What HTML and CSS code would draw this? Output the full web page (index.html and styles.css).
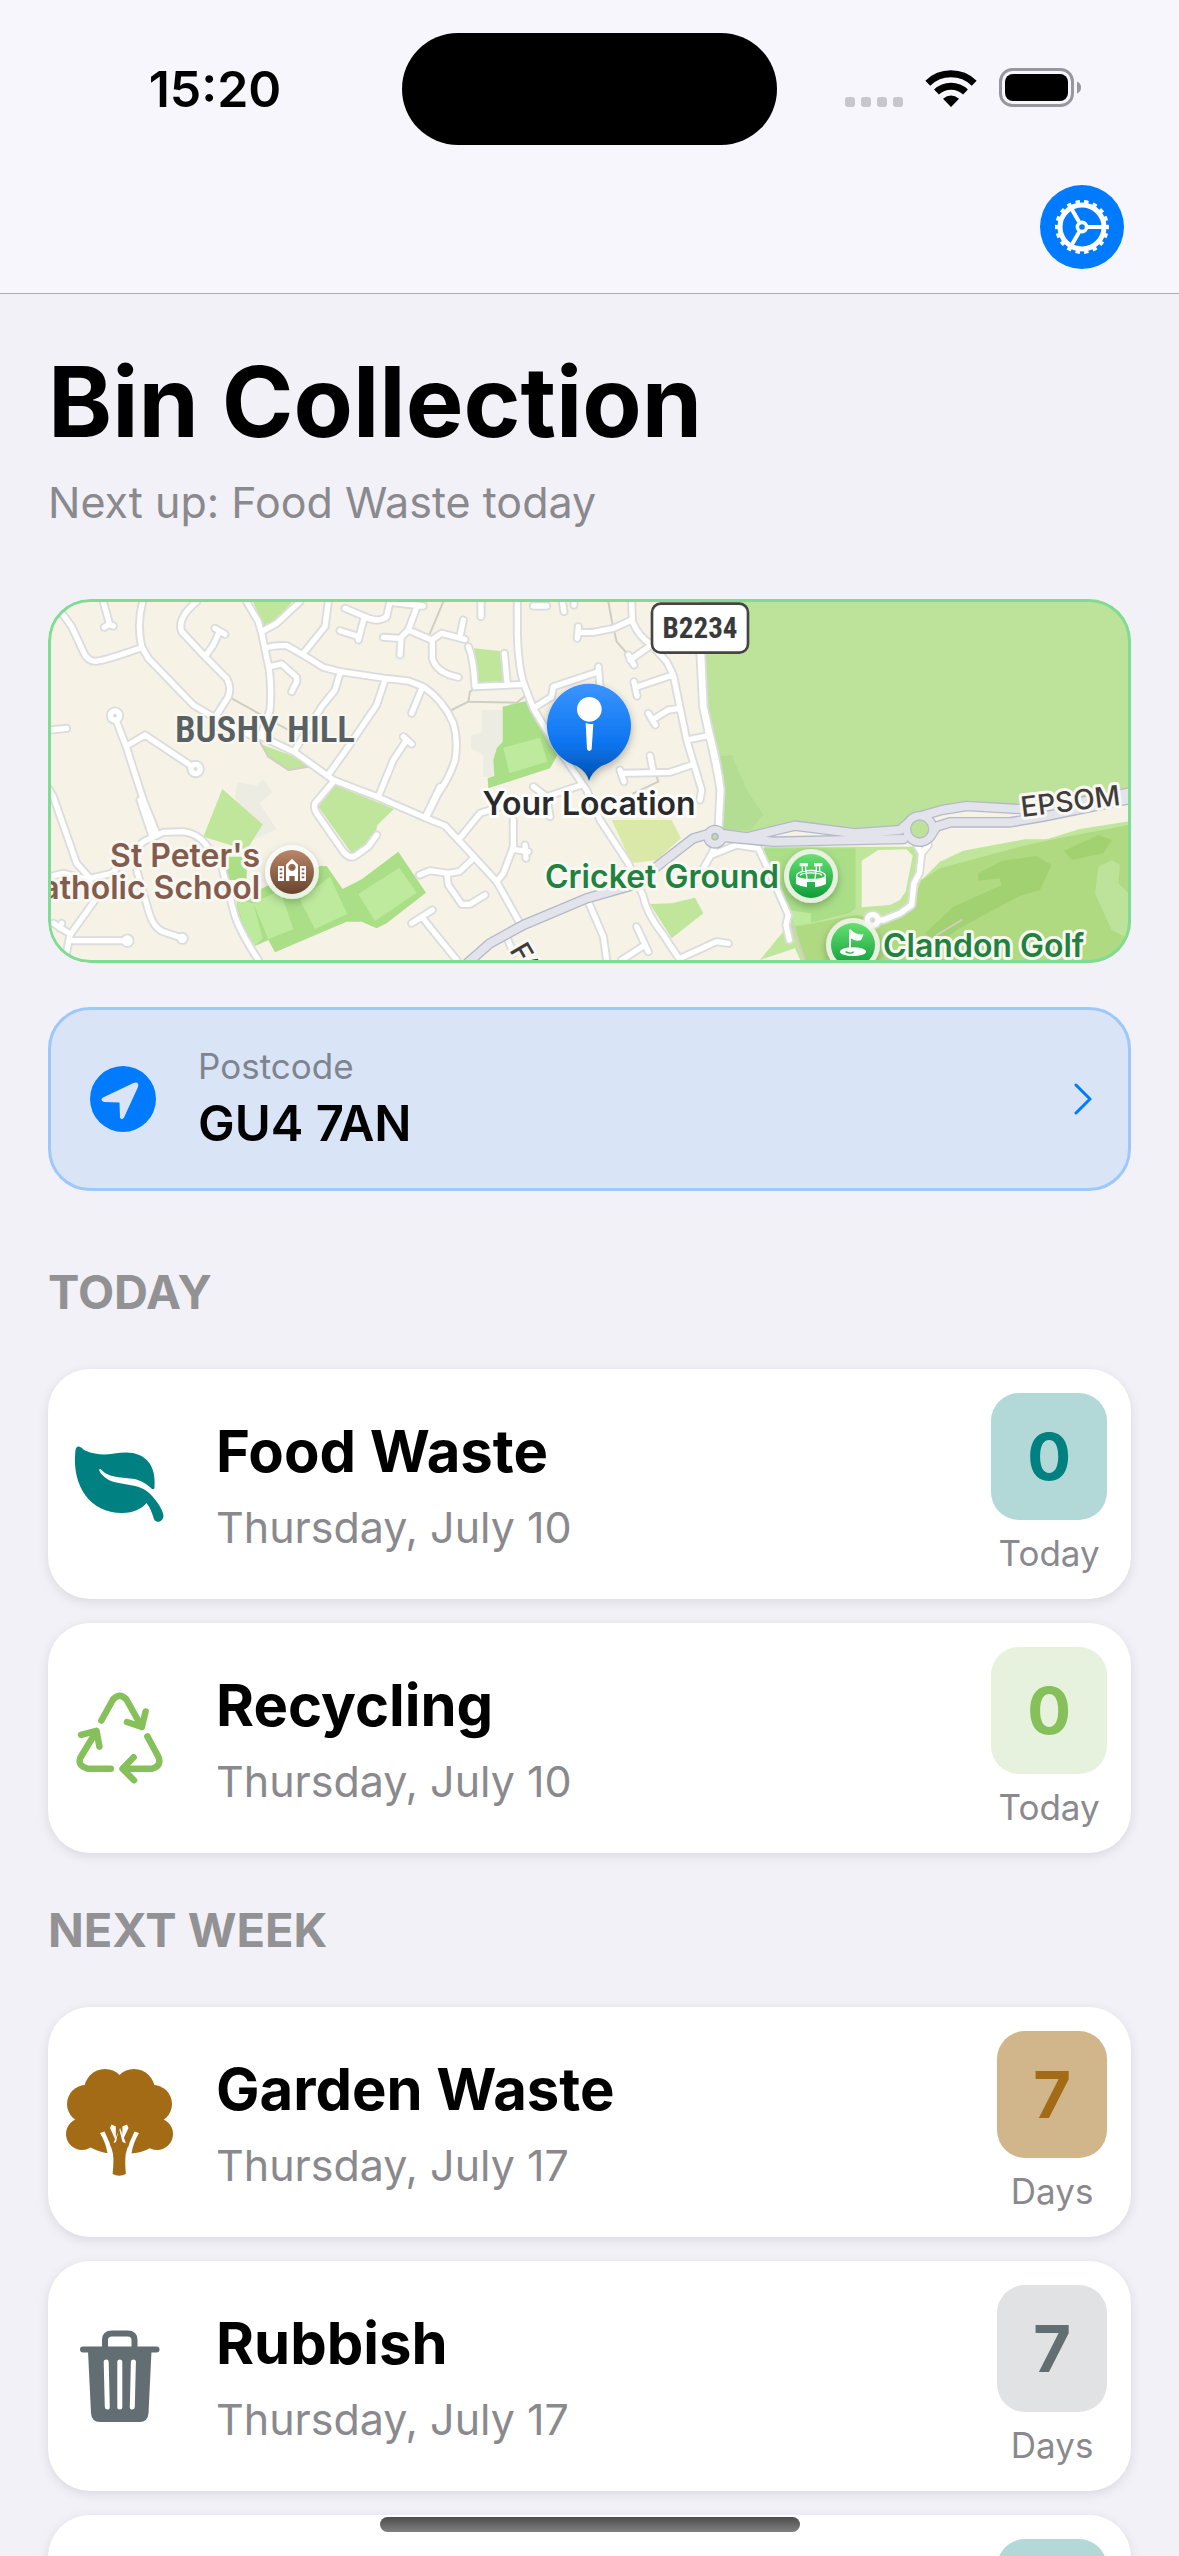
FILE: index.html
```html
<!DOCTYPE html>
<html lang="en">
<head>
<meta charset="utf-8">
<meta name="viewport" content="width=device-width, initial-scale=1">
<title>Bin Collection</title>
<link rel="stylesheet" href="styles.css">
</head>
<body>
<svg class="sprite" aria-hidden="true">
  <symbol id="icon-leaf" viewBox="0 0 108 108">
    <path fill="currentColor" d="M12 16.500C10 17 9.600 19 9.300 22C6 56 24 83 56 83C68 83 76 78.500 80.500 73C84.500 78 86 83 88 89C89.500 93.500 97 92.500 97.500 86C97.500 80 88 66 80 60.500C66 52 50 56 39 47.500C35.500 44.500 33.500 42 33.200 40C33.400 38.800 34.500 38.800 35.500 40C44 49 60 47 70.500 49.500C77 51.500 82 55 85.500 58.500C87 59.600 88.300 59 88.500 57.500C90.500 36 80 22.500 60 22.500C46 22.500 37 28 19 20.500C16 18.500 14.500 16 12 16.500Z"/>
  </symbol>
</svg>
<div class="app">
  <header class="header">
    <div class="status">
      <time class="clock">15:20</time>
      <div class="island"></div>
      <div class="indicators">
        <svg width="58" height="10" viewBox="0 0 58 10" aria-hidden="true"><g fill="#c7c6cb"><rect width="10" height="10" rx="3"/><rect x="16" width="10" height="10" rx="3"/><rect x="32" width="10" height="10" rx="3"/><rect x="48" width="10" height="10" rx="3"/></g></svg>
        <svg width="52" height="38" viewBox="0 0 52 38" aria-hidden="true"><g fill="none" stroke="#000"><path stroke-width="7" d="M2.800 14.200A33.400 33.400 0 0 1 49.200 14.200"/><path stroke-width="7" d="M11.500 23A21 21 0 0 1 40.500 23"/></g><path d="M26 38L18 29.800Q26 23 34 29.800Z"/></svg>
        <svg width="82" height="39" viewBox="0 0 82 39" aria-hidden="true"><rect x="1.500" y="1.500" width="72" height="36" rx="12" fill="none" stroke="#98979c" stroke-width="3"/><rect x="6" y="6" width="63" height="27" rx="8"/><path fill="#98979c" d="M78 13.500Q82 15 82 19.500T78 25.500Z"/></svg>
      </div>
    </div>
    <nav class="toolbar">
      <button class="settings" type="button" aria-label="Settings">
        <svg viewBox="0 0 84 84" fill="none" stroke="#fff" aria-hidden="true">
          <circle cx="42" cy="42" r="22" stroke-width="5"/>
          <circle cx="42" cy="42" r="25" stroke-width="4" pathLength="36" stroke-dasharray="1 1" stroke-dashoffset="0.500"/>
          <circle cx="42" cy="42" r="4.600" stroke-width="3.600"/>
          <path stroke-width="4" d="M48 42H63M39 36.800L31.500 23.800M39 47.200L31.500 60.200"/>
        </svg>
      </button>
    </nav>
  </header>

  <main class="content">
    <h1 class="title">Bin Collection</h1>
    <p class="subtitle">Next up: Food Waste today</p>

    <div class="map">
      <svg class="map-art" viewBox="0 0 1083 364" preserveAspectRatio="xMidYMid slice" role="img" aria-label="Map of your location">
        <defs>
          <linearGradient id="pin-blue" x1="0" y1="0" x2="0" y2="1"><stop offset="0" stop-color="#3b94ff"/><stop offset=".6" stop-color="#0d76f0"/><stop offset="1" stop-color="#0050ac"/></linearGradient>
          <linearGradient id="poi-brown" x1="0" y1="0" x2="0" y2="1"><stop offset="0" stop-color="#ba8768"/><stop offset="1" stop-color="#67432f"/></linearGradient>
          <linearGradient id="poi-green" x1="0" y1="0" x2="0" y2="1"><stop offset="0" stop-color="#66e070"/><stop offset="1" stop-color="#0e9d3a"/></linearGradient>
          <filter id="soft" x="-30%" y="-30%" width="160%" height="170%"><feDropShadow dx="0" dy="10" stdDeviation="12" flood-opacity=".3"/></filter>
          <g id="streets">
            <path d="M45 55L70 75L95 110L130 185Q142 214 168 214Q190 213 300 175M190 35L208 100M193 112L208 103L220 108M308 35Q290 100 305 170L325 205L460 345L510 375L640 440L665 440L765 487L880 570L1015 622L1155 683L1215 707L1260 755L1370 875L1440 1000M470 35Q410 85 425 125L495 200L560 265Q575 290 565 320L530 375M495 200L520 165L538 125M525 115L555 133M620 35L655 95L665 130L688 240Q695 300 690 360L665 430M665 125L710 100L780 35M675 175Q700 165 740 167L790 195L850 232L900 245L1035 265L1105 273L1150 290Q1210 330 1240 400Q1255 450 1245 510Q1230 560 1195 610L1160 680M865 35L855 110L790 190M690 230L725 222L770 262V275L755 305M900 250L885 300L845 350L765 480M1035 270L1010 345L925 470L868 550M1147 292L1115 370M1090 440L1115 462M1100 450L1060 510L1015 620M915 55L975 80Q1010 100 1040 80L1050 35M972 85L955 150M900 122L950 138M1060 38L1150 48M1133 45L1105 120L1080 145L1030 142M1083 145L1080 195M1105 120L1175 150L1205 130L1275 148M1260 140L1270 90M1177 150V205Q1190 250 1255 262"/>
            <circle cx="225" cy="377" r="14"/><circle cx="467" cy="537" r="14"/><circle cx="262" cy="1052" r="8"/><circle cx="427" cy="1045" r="6"/>
            <path d="M228 390L258 468L310 630L352 735M300 630L335 735M260 468L315 435L345 455L450 525M30 420L80 415M25 595L40 620L110 820L150 865L215 850L310 755L370 727L430 725Q470 730 495 760L545 830L580 960Q590 1010 655 1110M30 860L70 850L150 870M290 840L325 960Q340 1015 370 1025L427 1045M165 930L90 1035L75 1110M40 1000L90 1032M65 1000L60 1015M90 1052H250M880 575L825 640Q820 655 830 670L910 785Q930 810 950 795L985 770L1010 735M1155 683L1200 590"/>
            <g transform="translate(1080)">
              <path d="M243 35V80M205 170Q220 200 225 290L370 283M313 190L322 285M352 35V130Q355 240 375 290L400 355L460 455L560 600L600 690L685 820L730 920Q740 970 790 1035L840 1110M175 750L240 670L300 650M340 690V770L310 850L290 875M340 778L385 785M375 765L378 805M215 810L178 845L145 850L90 842L58 855M140 850L145 885L185 943H210L255 915M35 1000L97 960M65 980L105 1030L170 1110M400 355L455 320L460 290L595 245M595 230L600 290M400 590L440 620L450 680M440 620L545 585M400 48H440M487 35L492 65M522 35V45M535 110L532 145M535 128L580 127L640 115L695 90M695 35L697 95Q720 145 750 160L800 215L820 255L860 450L905 600L900 630M750 168L690 210M685 195L702 225M818 255L708 292M702 275L711 318M840 355L805 360L760 388M745 370L766 405M860 450L925 437M875 525L810 547L665 550M660 540L672 575M750 497L760 545M960 740L930 800L910 835M935 795L1010 765L1075 775L1110 850L1165 975L1158 1005L1168 1050M565 935L610 1040L620 1110M320 1040L340 1090M710 1010L745 1085M735 1065L665 1110M840 1105L950 1055L985 1060"/>
              <path d="M898 150L908 350L925 430Q950 530 960 600L955 710"/>
              <path d="M903 150L912 350L930 430Q955 530 963 600L957 710"/>
            </g>
            <g transform="translate(2160)"><path d="M470 765L485 790L505 765M485 790L478 850L462 880L455 945L420 970L370 990H355"/><circle cx="338" cy="990" r="16"/></g>
          </g>
          <g id="trunk-roads">
            <path d="M1270 1130L1350 1060L1450 1005L1640 925L1780 885L1850 830L1960 745L2020 728L2120 742L2265 707L2445 730L2580 720L2620 685L2705 660L2780 648L2940 657L3100 640L3280 605M2040 740L2200 755L2590 747M2670 740L2690 710L2730 697L2910 697L3010 680L3280 625"/>
            <circle cx="2025" cy="740" r="20"/><circle cx="2639" cy="717" r="38"/>
          </g>
        </defs>
        <rect width="1083" height="364" fill="#f6f2e6"/>
        <g transform="translate(-8 -9) scale(.33333)">
          <path fill="#ecece2" d="M592 577L650 587L668 567L698 605L658 640L710 718L640 750L620 700L585 620ZM1325 360H1387V455L1365 480L1363 560H1330V495L1293 475V435L1325 428Z"/>
          <g fill="#bfe69a">
            <path d="M635 25H765L710 90L670 110ZM660 462L765 500L805 528L745 540L685 500ZM547 597L668 703L620 780L490 740ZM885 585L1062 657L1012 705L1008 725L960 785L935 790L835 650ZM1302 175L1385 184L1390 275L1315 280ZM1830 942L1895 940L1965 923L1990 970L1895 1045Z"/>
            <path fill="#bde29a" d="M1980 25H3300V625L2940 657L2780 648L2620 685L2580 720L2445 730L2265 707L2120 742L2035 735L2040 600L2005 430L1988 350Z"/>
            <path fill="#b2dd93" d="M2035 500L2075 495L2120 600L2170 675L2130 720L2035 720Z"/>
            <path d="M2170 770H2650L2645 870L2700 815L2770 782L2955 748L3020 748L3120 717L3290 690V1130H2290L2265 1075L2160 1110L2250 1000Z"/>
          </g>
          <path fill="#aadf88" d="M840 828H860L908 897L965 868L1075 785L1158 908L1040 1000L1010 1015L965 995H920L705 1087L685 1050L645 1068Q590 990 590 930L700 880ZM1388 350L1458 333L1555 490L1530 535L1345 595L1343 565L1363 558L1360 510L1370 475L1388 455ZM560 800H620V870H560ZM2170 775H2447V955L2430 968L2265 1010L2200 860Z"/>
          <path fill="#bdea9c" d="M955 912L1078 833L1130 908L1005 993ZM780 930L870 860L922 972L825 1017ZM640 940L720 900L760 1018L685 1048ZM1390 473L1500 443L1522 515L1408 550ZM590 930L640 940L668 1045L645 1068Q600 1000 590 930ZM2245 960L2313 970V998L2265 1008Z"/>
          <path fill="#dae8a8" d="M1715 690H1895L1923 745L1850 810L1775 820Z"/>
          <path fill="#b0da82" d="M2265 1010L2450 975L2530 990L2615 945L2645 870L2700 835L2960 765L3040 748L3290 700V1130H2300Z"/>
          <path fill="#a2d172" d="M2815 850L2885 812L2990 798L3035 825L3000 900L2940 918L2850 965L2750 1020L2700 1060L2655 1030L2740 950L2885 885L2878 865L2815 872ZM3072 782L3175 735L3217 750L3190 790L3095 810Z"/>
          <path fill="#bde29a" d="M3175 830L3215 810L3240 825L3235 880L3275 920V1050L3215 1020L3165 910Z"/>
          <path fill="#f6f2e6" d="M2465 812L2515 780L2600 778L2618 797L2597 905L2580 930L2550 945L2465 952Z"/>
          <path class="footpath" d="M575 325L745 420M660 455L685 500L745 540L805 530M1210 35L1170 130M1235 360L1285 335L1290 305L1305 295M1285 335L1430 338L1455 318M1705 35L1715 90L1730 155L1765 195M1780 610L1855 575L1850 560M2245 975L2295 1110M2690 1035L2765 990"/>
          <use href="#streets" class="street-edge"/>
          <use href="#streets" class="street"/>
          <use href="#trunk-roads" class="trunk-edge"/>
          <use href="#trunk-roads" class="trunk"/>
          <circle cx="2639" cy="717" r="27" fill="#bde29a" stroke="#b6bac9" stroke-width="4"/>
          <circle cx="2025" cy="740" r="9" fill="#bde29a" stroke="#b6bac9" stroke-width="5"/>
          <g transform="translate(756 846)"><circle r="81" fill="#fff" fill-opacity=".75" filter="url(#soft)"/><circle r="66" fill="url(#poi-brown)"/><path fill="#fff" fill-rule="evenodd" d="M-42-18H-24V27H-42ZM24-18H42V27H24ZM-18-22L0-40L18-22V27H8V12H-8V27H-18ZM0-25A11 11 0 1 0 .1-25Z"/><path stroke="#8b6047" stroke-width="5" d="M-37-8H-29M-37 4H-29M-37 16H-29M29-8H37M29 4H37M29 16H37M0-19V-12H7" fill="none"/></g>
          <g transform="translate(2313 858)"><circle r="81" fill="#f3f7ee" fill-opacity=".85" filter="url(#soft)"/><circle r="66" fill="url(#poi-green)"/><g fill="#fff"><path d="M-34-39H-9V-29H-34ZM9-39H34V-29H9ZM-45 2Q0 24 45 2V24Q30 32 12 34V18H-12V34Q-30 32-45 24Z"/><path fill="none" stroke="#fff" stroke-width="4" d="M-26-29V-14M-16-29V-14M16-29V-14M26-29V-14M-43 0C-43-22 43-22 43 0C43 14-43 14-43 0M-33-2C-25-12 25-12 33-2M-15-14L-12 8M15-14L12 8"/></g></g>
          <g transform="translate(2439 1065)"><circle r="81" fill="#f3f7ee" fill-opacity=".85" filter="url(#soft)"/><circle r="66" fill="url(#poi-green)"/><ellipse cx="0" cy="20" rx="39" ry="13" fill="#fff"/><path fill="none" stroke="#29af4b" stroke-width="4" d="M-22 20Q-8 29 2 20"/><path fill="#fff" d="M-12-44Q-10-49-6-46Q8-30 32-32L24-14Q4-10-6-20V20H-12Z"/></g>
          <path fill="url(#pin-blue)" filter="url(#soft)" d="M1647 573Q1640 545 1610 528A126 126 0 1 1 1684 528Q1656 545 1647 573Z"/>
          <circle cx="1648" cy="358" r="37" fill="#fff"/><path fill="#fff" d="M1637 399Q1648 403 1660 401L1655 478Q1648 488 1641 478Z"/>
          <rect x="1836" y="41" width="288" height="147" rx="26" fill="#fff" stroke="#454545" stroke-width="8"/>
        </g>
        <g class="map-labels">
          <text class="district" x="217" y="143" text-anchor="middle">BUSHY HILL</text>
          <text class="road-number" x="652" y="39" text-anchor="middle">B2234</text>
          <text class="place" x="541" y="216" text-anchor="middle">Your Location</text>
          <text class="school" x="212" y="268" text-anchor="end">St Peter's</text>
          <text class="school" x="212" y="300" text-anchor="end">atholic School</text>
          <text class="leisure" x="731" y="289" text-anchor="end">Cricket Ground</text>
          <text class="leisure" x="835" y="358">Clandon Golf</text>
          <text class="road-name" transform="translate(974 218) rotate(-7)">EPSOM</text>
          <text class="road-name" transform="translate(461 351) rotate(60)">FA</text>
        </g>
      </svg>
    </div>

    <button class="postcode" type="button">
      <svg class="postcode-icon" viewBox="0 0 66 66" aria-hidden="true"><circle cx="33" cy="33" r="33" fill="#007aff"/><path fill="#dae4f7" d="M13 31.500L43.500 17Q49.500 15 48 21L34 51.500Q31.500 55 30 51.500L29.500 36.500L14 36Q9.500 34 13 31.500Z"/></svg>
      <span class="postcode-text">
        <span class="postcode-label">Postcode</span>
        <span class="postcode-value">GU4 7AN</span>
      </span>
      <svg class="chevron" viewBox="0 0 18 32" aria-hidden="true"><path fill="none" stroke="#007aff" stroke-width="3" stroke-linecap="round" stroke-linejoin="round" d="M2 2L16 16L2 30"/></svg>
    </button>

    <section class="group">
      <h2 class="group-title">TODAY</h2>
      <ul class="cards">
        <li class="card food">
          <svg class="card-icon" aria-hidden="true"><use href="#icon-leaf"/></svg>
          <div class="card-text"><h3 class="card-title">Food Waste</h3><p class="card-date">Thursday, July 10</p></div>
          <div class="countdown"><span class="badge">0</span><span class="unit">Today</span></div>
        </li>
        <li class="card recycling">
          <svg class="card-icon" viewBox="0 0 108 108" fill="none" stroke="currentColor" stroke-width="6.500" stroke-linecap="round" stroke-linejoin="round" aria-hidden="true"><path d="M35.400 36.500L47 15.500Q53.700 8 60.400 15.500L75.800 43M79.600 27.500L75.800 43L61 38M44.800 84.800H22Q11 82 14.500 73.500L30.500 47M15 50.800L30.500 46.800L33.400 62.600M81.400 52.400L92.500 73Q96 82 85.400 84.800H57M67.600 73.300L56.500 84.800L68 96.200"/></svg>
          <div class="card-text"><h3 class="card-title">Recycling</h3><p class="card-date">Thursday, July 10</p></div>
          <div class="countdown"><span class="badge">0</span><span class="unit">Today</span></div>
        </li>
      </ul>
    </section>

    <section class="group">
      <h2 class="group-title">NEXT WEEK</h2>
      <ul class="cards">
        <li class="card garden">
          <svg class="card-icon" viewBox="0 0 108 108" fill="currentColor" aria-hidden="true"><circle cx="39" cy="22" r="21"/><circle cx="68" cy="22" r="21"/><circle cx="20" cy="36" r="19"/><circle cx="87" cy="36" r="19"/><circle cx="16" cy="66" r="16"/><circle cx="91" cy="66" r="16"/><path d="M15 30H92V70L86 79Q76 85 64 85.500L54 60L43 85.500Q32 84 22 78Z"/><g fill="#fff"><path d="M34 65L38.500 63.500Q44 74 47 86L43 90L41.500 85.500Q40 75 34 65ZM73 65L68.500 63.500Q63 74 60 86L64 90L65.500 85.500Q67 75 73 65ZM45.500 56.500L44 60L49.800 73V58.500ZM61 56.500L62.500 60L56.400 73V58.500Z"/><path d="M43 85L47 80L60 80L64 85L60 98H46Z"/></g><path d="M46.600 106Q48 94 47 86L44.500 76L50 74L53 60L56.500 74L62.500 76L59.700 86Q58.700 95 59.900 106Q53 109.500 46.600 106Z"/></svg>
          <div class="card-text"><h3 class="card-title">Garden Waste</h3><p class="card-date">Thursday, July 17</p></div>
          <div class="countdown"><span class="badge">7</span><span class="unit">Days</span></div>
        </li>
        <li class="card rubbish">
          <svg class="card-icon" viewBox="0 0 108 108" fill="currentColor" aria-hidden="true"><rect x="14" y="24.500" width="79.500" height="6" rx="3"/><path fill="none" stroke="currentColor" stroke-width="6" d="M39 26V18Q39 11.500 46 11.500H61.500Q68.500 11.500 68.500 18V26"/><path d="M22 29H85.500L82.500 91Q82 100 73.500 100H34Q25.500 100 25 91Z"/><path fill="none" stroke="#fff" stroke-width="5" stroke-linecap="round" d="M40.200 40L41.300 85M53.800 40V85M67.400 40L66.300 85"/></svg>
          <div class="card-text"><h3 class="card-title">Rubbish</h3><p class="card-date">Thursday, July 17</p></div>
          <div class="countdown"><span class="badge">7</span><span class="unit">Days</span></div>
        </li>
        <li class="card food">
          <svg class="card-icon" aria-hidden="true"><use href="#icon-leaf"/></svg>
          <div class="card-text"><h3 class="card-title">Food Waste</h3><p class="card-date">Thursday, July 17</p></div>
          <div class="countdown"><span class="badge">7</span><span class="unit">Days</span></div>
        </li>
      </ul>
    </section>
  </main>
  <div class="home-indicator"></div>
</div>
</body>
</html>
```

FILE: styles.css
```css
* {
  box-sizing: border-box;
}

body {
  margin: 0;
  background: #f2f1f7;
  color: #000;
  font-family: Inter, "Liberation Sans", sans-serif;
}

h1, h2, h3, p, ul {
  margin: 0;
  padding: 0;
}

button {
  border: 0;
  font: inherit;
  color: inherit;
  cursor: pointer;
}

.sprite {
  position: absolute;
  width: 0;
  height: 0;
}

.app {
  position: relative;
  display: flex;
  flex-direction: column;
  height: 100vh;
  overflow: hidden;
}

/* Status bar and toolbar */
.header {
  flex: none;
  padding-top: 33px;
  background: #f6f6fc;
  border-bottom: 1px solid #adadb2;
}

.status {
  display: grid;
  grid-template-columns: 1fr 375px 1fr;
  align-items: center;
}

.clock {
  padding-left: 28px;
  text-align: center;
  font-size: 50px;
  font-weight: 600;
  line-height: 60px;
}

.island {
  height: 112px;
  border-radius: 56px;
  background: #000;
}

.indicators {
  display: flex;
  justify-content: center;
  align-items: flex-end;
  gap: 22px;
  padding: 0 30px 4px 0;
}

.toolbar {
  display: flex;
  justify-content: flex-end;
  padding: 40px 55px 24px;
}

.settings {
  width: 84px;
  height: 84px;
  padding: 0;
  border-radius: 50%;
  background: #007aff;
}

.settings svg {
  display: block;
}

/* Scrolling content */
.content {
  flex: 1;
  min-height: 0;
  padding: 48px 48px 0;
  overflow-y: auto;
  scrollbar-width: none;
}

.title {
  font-size: 97px;
  font-weight: 700;
  line-height: 120px;
}

.subtitle {
  margin-top: 13px;
  color: #8a898e;
  font-size: 43px;
  line-height: 54px;
}

/* Map */
.map {
  position: relative;
  height: 364px;
  margin-top: 70px;
  border-radius: 42px;
  overflow: hidden;
}

.map::after {
  content: "";
  position: absolute;
  inset: 0;
  border: 3px solid #7fdc93;
  border-radius: 42px;
}

.map-art {
  display: block;
  width: 100%;
  height: 100%;
}

.footpath, .street-edge, .street, .trunk-edge, .trunk {
  fill: none;
  stroke-linecap: round;
  stroke-linejoin: round;
}

.footpath { stroke: #cfcec4; stroke-width: 6px; }
.street-edge { stroke: #dbdcde; stroke-width: 27px; }
.street { stroke: #fff; stroke-width: 16px; }
.trunk-edge { stroke: #b4b9c9; stroke-width: 32px; }
.trunk { stroke: #e3e4eb; stroke-width: 24px; }

.map-labels text {
  paint-order: stroke;
  stroke: #f8f7f2;
  stroke-width: 6px;
  stroke-linejoin: round;
  font-size: 32px;
  font-weight: 600;
}

.map-labels .district {
  fill: #596061;
  stroke-width: 4px;
  font-family: "Liberation Sans Narrow", "Roboto Condensed", Roboto, sans-serif;
  font-size: 37px;
}

.map-labels .road-number {
  fill: #3a3a3a;
  stroke: none;
  font-family: "Liberation Sans Narrow", "Roboto Condensed", Roboto, sans-serif;
  font-size: 29px;
  font-weight: 700;
}

.map-labels .place { fill: #2a2a2c; stroke: #fff; }
.map-labels .school { fill: #835c4d; }
.map-labels .leisure { fill: #21823f; }
.map-labels .road-name { fill: #3f3c3c; font-size: 28px; font-weight: 500; }

/* Postcode selector */
.postcode {
  display: flex;
  align-items: center;
  width: 100%;
  margin-top: 44px;
  padding: 34px 36px 34px 39px;
  border: 3px solid #9dc8fa;
  border-radius: 42px;
  background: #dae4f7;
  text-align: left;
}

.postcode-icon {
  flex: none;
  width: 66px;
  height: 66px;
}

.postcode-text {
  display: flex;
  flex: 1;
  flex-direction: column;
  gap: 6px;
  margin-left: 42px;
}

.postcode-label {
  color: #7f8590;
  font-size: 35px;
  line-height: 44px;
}

.postcode-value {
  font-size: 49px;
  font-weight: 600;
  line-height: 60px;
}

.chevron {
  width: 18px;
  height: 32px;
}

/* Collection groups */
.group {
  padding-top: 48px;
}

.postcode + .group {
  padding-top: 72px;
}

.group-title {
  color: #929295;
  font-size: 47px;
  font-weight: 700;
  line-height: 58px;
}

.cards {
  display: flex;
  flex-direction: column;
  gap: 24px;
  margin-top: 48px;
  list-style: none;
}

.card {
  display: flex;
  align-items: center;
  padding: 24px 24px 24px 18px;
  border-radius: 42px;
  background: #fff;
  box-shadow: 0 3px 12px rgba(0, 0, 0, 0.1);
}

.card-icon {
  flex: none;
  width: 108px;
  height: 108px;
  color: var(--tint);
}

.card-text {
  display: flex;
  flex: 1;
  flex-direction: column;
  gap: 13px;
  margin-left: 42px;
}

.card-title {
  font-size: 58px;
  font-weight: 700;
  line-height: 72px;
}

.card-date {
  color: #8a898e;
  font-size: 43px;
  line-height: 54px;
}

.countdown {
  display: flex;
  flex-direction: column;
  align-items: center;
  gap: 11px;
}

.badge {
  padding: 24px 36px;
  border-radius: 28px;
  background: var(--tint-soft);
  color: var(--tint);
  font-size: 65px;
  font-weight: 700;
  line-height: 79px;
}

.unit {
  color: #8a898e;
  font-size: 35px;
  line-height: 44px;
}

.food { --tint: #008080; --tint-soft: #b2d9d8; }
.recycling { --tint: #85c05a; --tint-soft: #e6f2dd; }
.garden { --tint: #a46b16; --tint-soft: #d1b58b; }
.rubbish { --tint: #636e72; --tint-soft: #e0e2e3; }

.home-indicator {
  position: absolute;
  bottom: 24px;
  left: 50%;
  width: 420px;
  height: 15px;
  margin-left: -210px;
  border-radius: 8px;
  background: linear-gradient(#4c4c4c, #808080);
}
```
